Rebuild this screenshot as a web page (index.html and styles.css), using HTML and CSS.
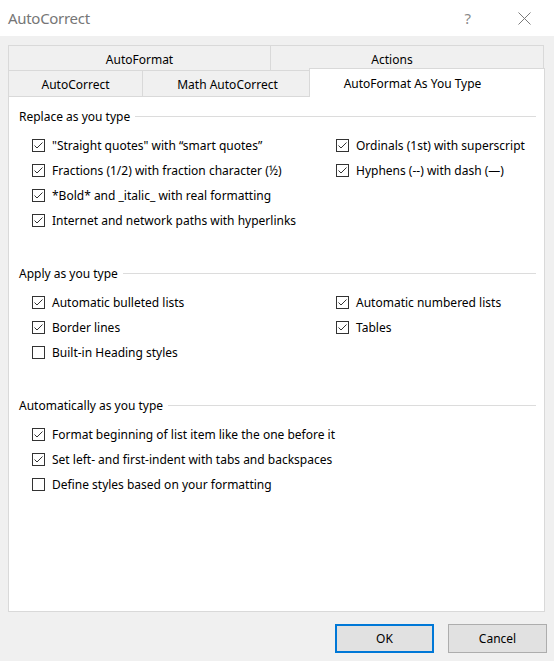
FILE: index.html
```html
<!DOCTYPE html>
<html>
<head>
<meta charset="utf-8">
<link rel="stylesheet" href="styles.css">
</head>
<body>
<div class="window">
  <div class="titlebar">
    <span class="title">AutoCorrect</span>
    <span class="help">?</span>
    <span class="close"><svg width="13" height="13" viewBox="0 0 13 13"><path d="M0.5 0.5 L12.5 12.5 M12.5 0.5 L0.5 12.5" stroke="#7a7a7a" stroke-width="1" fill="none"/></svg></span>
  </div>
  <div class="body">
    <div class="tabs">
      <div class="tabrow row1">
        <div class="tab t-autoformat">AutoFormat</div>
        <div class="tab t-actions">Actions</div>
      </div>
      <div class="tabrow row2">
        <div class="tab t-ac">AutoCorrect</div>
        <div class="tab t-math">Math AutoCorrect</div>
        <div class="tab active">AutoFormat As You Type</div>
      </div>
    </div>
    <div class="panel">
      <section class="group">
        <div class="group-head"><span>Replace as you type</span><span class="rule"></span></div>
        <div class="cols">
          <div class="col col-left">
            <label class="item"><span class="cb checked"><svg width="13" height="13" viewBox="0 0 13 13"><rect x="0.5" y="0.5" width="12" height="12" fill="#fff" stroke="#333"/><polyline points="2.5,6.5 5,9 10.5,3.5" fill="none" stroke="#333"/></svg></span><span>"Straight quotes" with “smart quotes”</span></label>
            <label class="item"><span class="cb checked"><svg width="13" height="13" viewBox="0 0 13 13"><rect x="0.5" y="0.5" width="12" height="12" fill="#fff" stroke="#333"/><polyline points="2.5,6.5 5,9 10.5,3.5" fill="none" stroke="#333"/></svg></span><span>Fractions (1/2) with fraction character (½)</span></label>
            <label class="item"><span class="cb checked"><svg width="13" height="13" viewBox="0 0 13 13"><rect x="0.5" y="0.5" width="12" height="12" fill="#fff" stroke="#333"/><polyline points="2.5,6.5 5,9 10.5,3.5" fill="none" stroke="#333"/></svg></span><span>*Bold* and _italic_ with real formatting</span></label>
            <label class="item"><span class="cb checked"><svg width="13" height="13" viewBox="0 0 13 13"><rect x="0.5" y="0.5" width="12" height="12" fill="#fff" stroke="#333"/><polyline points="2.5,6.5 5,9 10.5,3.5" fill="none" stroke="#333"/></svg></span><span>Internet and network paths with hyperlinks</span></label>
          </div>
          <div class="col col-right">
            <label class="item"><span class="cb checked"><svg width="13" height="13" viewBox="0 0 13 13"><rect x="0.5" y="0.5" width="12" height="12" fill="#fff" stroke="#333"/><polyline points="2.5,6.5 5,9 10.5,3.5" fill="none" stroke="#333"/></svg></span><span>Ordinals (1st) with superscript</span></label>
            <label class="item"><span class="cb checked"><svg width="13" height="13" viewBox="0 0 13 13"><rect x="0.5" y="0.5" width="12" height="12" fill="#fff" stroke="#333"/><polyline points="2.5,6.5 5,9 10.5,3.5" fill="none" stroke="#333"/></svg></span><span>Hyphens (--) with dash (—)</span></label>
          </div>
        </div>
      </section>
      <section class="group g2">
        <div class="group-head"><span>Apply as you type</span><span class="rule"></span></div>
        <div class="cols">
          <div class="col col-left">
            <label class="item"><span class="cb checked"><svg width="13" height="13" viewBox="0 0 13 13"><rect x="0.5" y="0.5" width="12" height="12" fill="#fff" stroke="#333"/><polyline points="2.5,6.5 5,9 10.5,3.5" fill="none" stroke="#333"/></svg></span><span>Automatic bulleted lists</span></label>
            <label class="item"><span class="cb checked"><svg width="13" height="13" viewBox="0 0 13 13"><rect x="0.5" y="0.5" width="12" height="12" fill="#fff" stroke="#333"/><polyline points="2.5,6.5 5,9 10.5,3.5" fill="none" stroke="#333"/></svg></span><span>Border lines</span></label>
            <label class="item"><span class="cb"><svg width="13" height="13" viewBox="0 0 13 13"><rect x="0.5" y="0.5" width="12" height="12" fill="#fff" stroke="#333"/></svg></span><span>Built-in Heading styles</span></label>
          </div>
          <div class="col col-right">
            <label class="item"><span class="cb checked"><svg width="13" height="13" viewBox="0 0 13 13"><rect x="0.5" y="0.5" width="12" height="12" fill="#fff" stroke="#333"/><polyline points="2.5,6.5 5,9 10.5,3.5" fill="none" stroke="#333"/></svg></span><span>Automatic numbered lists</span></label>
            <label class="item"><span class="cb checked"><svg width="13" height="13" viewBox="0 0 13 13"><rect x="0.5" y="0.5" width="12" height="12" fill="#fff" stroke="#333"/><polyline points="2.5,6.5 5,9 10.5,3.5" fill="none" stroke="#333"/></svg></span><span>Tables</span></label>
          </div>
        </div>
      </section>
      <section class="group g3">
        <div class="group-head"><span>Automatically as you type</span><span class="rule"></span></div>
        <div class="cols">
          <div class="col col-left">
            <label class="item"><span class="cb checked"><svg width="13" height="13" viewBox="0 0 13 13"><rect x="0.5" y="0.5" width="12" height="12" fill="#fff" stroke="#333"/><polyline points="2.5,6.5 5,9 10.5,3.5" fill="none" stroke="#333"/></svg></span><span>Format beginning of list item like the one before it</span></label>
            <label class="item"><span class="cb checked"><svg width="13" height="13" viewBox="0 0 13 13"><rect x="0.5" y="0.5" width="12" height="12" fill="#fff" stroke="#333"/><polyline points="2.5,6.5 5,9 10.5,3.5" fill="none" stroke="#333"/></svg></span><span>Set left- and first-indent with tabs and backspaces</span></label>
            <label class="item"><span class="cb"><svg width="13" height="13" viewBox="0 0 13 13"><rect x="0.5" y="0.5" width="12" height="12" fill="#fff" stroke="#333"/></svg></span><span>Define styles based on your formatting</span></label>
          </div>
        </div>
      </section>
    </div>
    <div class="footer">
      <button class="btn ok">OK</button>
      <button class="btn">Cancel</button>
    </div>
  </div>
</div>
</body>
</html>
```

FILE: styles.css
```css
* { box-sizing: border-box; }
html, body { margin: 0; padding: 0; }
body {
  width: 554px;
  height: 661px;
  overflow: hidden;
  background: #f0f0f0;
  font-family: "Noto Sans", "Liberation Sans", sans-serif;
  font-size: 12px;
  color: #000;
}
.window { width: 554px; height: 661px; }
.titlebar {
  height: 36px;
  background: #fff;
  display: flex;
  align-items: center;
}
.title {
  padding-left: 8px;
  font-size: 15px;
  color: #767676;
  letter-spacing: -0.3px;
  flex: 1;
}
.help {
  font-size: 15px;
  color: #8a8a8a;
  margin-right: 47px;
}
.close {
  display: flex;
  margin-right: 23px;
}
.body { padding-top: 9px; }
.tabs { margin-left: 8px; }
.tabrow { display: flex; }
.tab {
  border: 1px solid #d9d9d9;
  border-bottom: none;
  background: #f0f0f0;
  display: flex;
  align-items: center;
  justify-content: center;
  white-space: nowrap;
}
.tab + .tab { margin-left: -1px; }
.row1 .tab { height: 25px; padding-top: 2px; }
.t-autoformat { width: 263px; }
.t-actions { width: 274px; padding-right: 30px; }
.row2 { align-items: flex-end; height: 26px; }
.row2 .tab { height: 26px; padding-top: 1px; }
.t-ac { width: 135px; }
.t-math { width: 168px; padding-left: 3px; }
.row2 .tab.active {
  width: 236px;
  height: 29px;
  margin-bottom: -1px;
  background: #fff;
  position: relative;
  z-index: 1;
  padding-right: 29px;
  padding-top: 0;
}
.panel {
  margin-left: 8px;
  width: 537px;
  height: 516px;
  background: #fff;
  border: 1px solid #d9d9d9;
  padding: 12px 8px 0 10px;
}
.group-head {
  display: flex;
  align-items: center;
  height: 16px;
  line-height: 16px;
}
.rule {
  flex: 1;
  height: 1px;
  background: #dcdcdc;
  margin-left: 5px;
  margin-top: -2px;
}
.cols {
  display: flex;
  margin-top: 8px;
  padding-left: 13px;
}
.col-left { width: 304px; }
.col { display: flex; flex-direction: column; }
.item {
  display: flex;
  align-items: center;
  height: 25px;
  white-space: nowrap;
}
.cb {
  display: flex;
  width: 13px;
  height: 13px;
  margin-right: 7px;
}
.g2 { margin-top: 33px; }
.g3 { margin-top: 33px; }
.footer {
  display: flex;
  justify-content: flex-end;
  gap: 14px;
  padding-right: 7px;
  margin-top: 12px;
}
.btn {
  width: 99px;
  height: 29px;
  background: #e1e1e1;
  border: 1px solid #adadad;
  font-family: inherit;
  font-size: 12px;
  color: #000;
  padding: 0;
}
.btn.ok { border: 2px solid #0078d7; }
```
